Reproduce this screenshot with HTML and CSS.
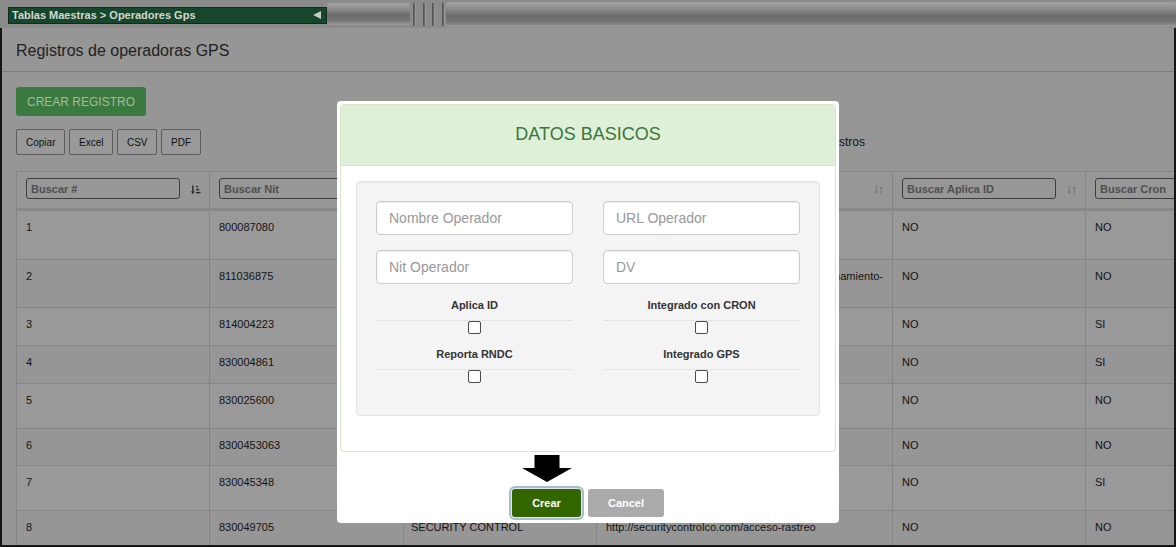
FILE: index.html
```html
<!DOCTYPE html>
<html lang="es">
<head>
<meta charset="utf-8">
<title>Operadores Gps</title>
<link rel="stylesheet" href="styles.css">
</head>
<body>
<div class="topbar">
  <div class="crumb"><span>Tablas Maestras &gt; Operadores Gps</span><span class="crumb-tri"></span></div>
  <div class="pill pill-short"></div>
  <div class="grip"><i></i><i></i><i></i><i></i></div>
  <div class="pill pill-long"></div>
</div>

<div class="frame">
  <div class="page-head"><h1>Registros de operadoras GPS</h1></div>
  <div class="content">
    <button class="btn-create">CREAR REGISTRO</button>
    <div class="toolbar">
      <button class="btn-exp">Copiar</button>
      <button class="btn-exp">Excel</button>
      <button class="btn-exp">CSV</button>
      <button class="btn-exp">PDF</button>
      <div class="dt-length">registros</div>
    </div>

    <table class="grid">
      <colgroup>
        <col class="c193"><col class="c194"><col class="c193"><col class="c296"><col class="c193"><col class="c193">
      </colgroup>
      <thead>
        <tr>
          <th><div class="th-in"><input class="search" placeholder="Buscar #"><svg class="sort on" viewBox="0 0 11 11"><path d="M2 0.5v7.5" stroke="currentColor" stroke-width="1.6"/><path d="M0 7h4l-2 3.5z" fill="currentColor"/><rect x="5.5" y="1" width="2" height="1.6" fill="currentColor"/><rect x="5.5" y="4.3" width="3.5" height="1.6" fill="currentColor"/><rect x="5.5" y="7.6" width="5" height="1.6" fill="currentColor"/></svg></div></th>
          <th><div class="th-in"><input class="search" placeholder="Buscar Nit"><svg class="sort" viewBox="0 0 11 11"><path d="M2.5 0.5v8" stroke="currentColor" stroke-width="1.3"/><path d="M0.5 7h4l-2 3z" fill="currentColor"/><path d="M8 2.5v8" stroke="currentColor" stroke-width="1.3"/><path d="M6 4h4l-2 -3z" fill="currentColor"/></svg></div></th>
          <th><div class="th-in"><input class="search"><svg class="sort" viewBox="0 0 11 11"><path d="M2.5 0.5v8" stroke="currentColor" stroke-width="1.3"/><path d="M0.5 7h4l-2 3z" fill="currentColor"/><path d="M8 2.5v8" stroke="currentColor" stroke-width="1.3"/><path d="M6 4h4l-2 -3z" fill="currentColor"/></svg></div></th>
          <th><div class="th-in"><input class="search"><svg class="sort" viewBox="0 0 11 11"><path d="M2.5 0.5v8" stroke="currentColor" stroke-width="1.3"/><path d="M0.5 7h4l-2 3z" fill="currentColor"/><path d="M8 2.5v8" stroke="currentColor" stroke-width="1.3"/><path d="M6 4h4l-2 -3z" fill="currentColor"/></svg></div></th>
          <th><div class="th-in"><input class="search" placeholder="Buscar Aplica ID"><svg class="sort" viewBox="0 0 11 11"><path d="M2.5 0.5v8" stroke="currentColor" stroke-width="1.3"/><path d="M0.5 7h4l-2 3z" fill="currentColor"/><path d="M8 2.5v8" stroke="currentColor" stroke-width="1.3"/><path d="M6 4h4l-2 -3z" fill="currentColor"/></svg></div></th>
          <th><div class="th-in"><input class="search" placeholder="Buscar Cron"><svg class="sort" viewBox="0 0 11 11"><path d="M2.5 0.5v8" stroke="currentColor" stroke-width="1.3"/><path d="M0.5 7h4l-2 3z" fill="currentColor"/><path d="M8 2.5v8" stroke="currentColor" stroke-width="1.3"/><path d="M6 4h4l-2 -3z" fill="currentColor"/></svg></div></th>
        </tr>
      </thead>
      <tbody>
        <tr class="h49"><td>1</td><td>800087080</td><td></td><td></td><td>NO</td><td>NO</td></tr>
        <tr class="h48"><td>2</td><td>811036875</td><td></td><td class="url"><span class="ln-r">posicionamiento-</span></td><td>NO</td><td>NO</td></tr>
        <tr class="h38"><td>3</td><td>814004223</td><td></td><td></td><td>NO</td><td>SI</td></tr>
        <tr class="h38"><td>4</td><td>830004861</td><td></td><td></td><td>NO</td><td>SI</td></tr>
        <tr class="h45"><td>5</td><td>830025600</td><td></td><td></td><td>NO</td><td>NO</td></tr>
        <tr class="h37"><td>6</td><td>8300453063</td><td></td><td></td><td>NO</td><td>NO</td></tr>
        <tr class="h45"><td>7</td><td>830045348</td><td></td><td></td><td>NO</td><td>SI</td></tr>
        <tr class="h45"><td>8</td><td>830049705</td><td class="nm">SECURITY CONTROL</td><td>http://securitycontrolco.com/acceso-rastreo</td><td>NO</td><td>NO</td></tr>
      </tbody>
    </table>
  </div>
</div>

<div class="modal">
  <div class="panel">
    <div class="panel-heading">DATOS BASICOS</div>
    <div class="panel-body">
      <div class="well">
        <div class="form-grid">
          <input class="fc" placeholder="Nombre Operador">
          <input class="fc" placeholder="URL Operador">
          <input class="fc" placeholder="Nit Operador">
          <input class="fc" placeholder="DV">
          <div class="chk first"><label>Aplica ID</label><div class="chk-line"><input type="checkbox"></div></div>
          <div class="chk first"><label>Integrado con CRON</label><div class="chk-line"><input type="checkbox"></div></div>
          <div class="chk"><label>Reporta RNDC</label><div class="chk-line"><input type="checkbox"></div></div>
          <div class="chk"><label>Integrado GPS</label><div class="chk-line"><input type="checkbox"></div></div>
        </div>
      </div>
    </div>
  </div>
  <div class="modal-footer">
    <div class="crear-wrap">
      <svg class="arrow" viewBox="0 0 50 27"><polygon points="12.5,0 37.5,0 37.5,13 50,13 25,27 0,13 12.5,13" fill="#000"/></svg>
      <button class="btn-crear">Crear</button>
    </div>
    <button class="btn-cancel">Cancel</button>
  </div>
</div>
</body>
</html>
```

FILE: styles.css
```css
* { box-sizing: border-box; }
html, body { margin: 0; padding: 0; }
body {
  width: 1176px;
  height: 547px;
  overflow: hidden;
  position: relative;
  background: #8b8b8b;
  font-family: "Liberation Sans", Arial, sans-serif;
}

/* ---------- top bar ---------- */
.topbar {
  height: 28px;
  display: flex;
  align-items: center;
  padding-left: 8px;
  background: #8b8b8b;
}
.crumb {
  width: 319px;
  height: 17px;
  margin-top: 2px;
  background: #17472a;
  border: 1px solid #0e2c19;
  display: flex;
  align-items: center;
  justify-content: space-between;
  padding: 0 4px 0 3px;
  color: #d3d7d3;
  font-size: 11px;
  font-weight: bold;
  white-space: nowrap;
}
.crumb-tri {
  width: 0;
  height: 0;
  border-top: 4px solid transparent;
  border-bottom: 4px solid transparent;
  border-right: 8px solid #c9c9c9;
  margin-right: 1px;
}
.pill {
  height: 22px;
  background: linear-gradient(#a3a3a3, #8f8f8f 25%, #6b6b6b 55%, #767676 80%, #9d9d9d);
  border-radius: 2px;
}
.pill-short { width: 83px; }
.pill-long { flex: 1; height: 25px; }
.grip {
  width: 36px;
  height: 23px;
  display: flex;
  gap: 6.5px;
  padding-left: 3px;
}
.grip i {
  display: block;
  width: 3px;
  background: linear-gradient(90deg, #4c4c4c, #6e6e6e 60%, #b2b2b2);
}

/* ---------- framed page ---------- */
.frame {
  height: 519px;
  border: 2px solid #161616;
  border-top: 0;
  overflow: hidden;
  background: #969696;
}
.page-head {
  height: 44px;
  border-bottom: 1px solid #7e7e7e;
  padding: 14px 14px 0;
}
.page-head h1 {
  margin: 0;
  font-size: 16px;
  line-height: 18px;
  font-weight: normal;
  color: #1f1f1f;
}
.content {
  padding: 15px 14px 0;
}
.btn-create {
  display: block;
  height: 29px;
  width: 130px;
  border: 0;
  border-radius: 3px;
  background: #3b7a3e;
  color: #a2bba2;
  font-family: inherit;
  font-size: 12px;
  padding: 0;
}
.toolbar {
  margin-top: 13px;
  display: flex;
  align-items: center;
  gap: 3.5px;
}
.btn-exp {
  height: 26px;
  padding: 0 9px;
  border: 1px solid #5c5c5c;
  border-radius: 2px;
  background: #999;
  color: #111;
  font-family: inherit;
  font-size: 10px;
}
.dt-length {
  margin-left: auto;
  margin-right: 295px;
  font-size: 12px;
  color: #141414;
}

/* ---------- table ---------- */
.grid {
  margin-top: 16px;
  width: 1262px;
  table-layout: fixed;
  border-collapse: separate;
  border-spacing: 0;
  border-top: 1px solid #858585;
  border-left: 1px solid #858585;
  font-size: 11px;
  color: #141414;
}
.c193 { width: 193px; }
.c194 { width: 194px; }
.c296 { width: 296px; }
.grid th {
  background: #979797;
  padding: 6px 8px 9px 9px;
  border-right: 1px solid #858585;
  border-bottom: 3px solid #898989;
  vertical-align: top;
  text-align: left;
  font-weight: normal;
}
.th-in {
  display: flex;
  align-items: center;
}
.search {
  width: 154px;
  height: 21px;
  border: 1px solid #3d3d3d;
  border-radius: 3px;
  background: transparent;
  padding: 0 4px;
  font-family: inherit;
  font-size: 11px;
  font-weight: bold;
  color: #4b4b4b;
}
.search::placeholder { color: #4f4f4f; }
.sort {
  margin-left: auto;
  width: 10px;
  height: 10px;
  color: #7a7a7a;
  margin-top: 2px;
}
.sort.on { color: #2c2c2c; }
.grid td {
  padding: 9px 9px 7px;
  line-height: 14px;
  vertical-align: top;
  border-right: 1px solid #858585;
  border-bottom: 1px solid #858585;
  background: #999;
}
.grid td.nm { padding-left: 7px; }
.grid tbody tr:nth-child(even) td { background: #969696; }
.h49 td { height: 49px; }
.h48 td { height: 48px; }
.h45 td { height: 45px; }
.h38 td { height: 38px; }
.h37 td { height: 37px; }
.url .ln-r {
  display: block;
  text-align: right;
  white-space: nowrap;
}

/* ---------- modal ---------- */
.modal {
  position: absolute;
  left: 337px;
  top: 101px;
  width: 502px;
  height: 422px;
  background: #fff;
  border-radius: 4px;
  padding: 3px;
}
.panel {
  border: 1px solid #d6e9c6;
  border-radius: 4px;
  overflow: hidden;
}
.panel-heading {
  background: #dff0d8;
  border-bottom: 1px solid #d6e9c6;
  color: #3c763d;
  font-size: 18px;
  line-height: 20px;
  text-align: center;
  padding: 19px 15px 21px;
}
.panel-body {
  padding: 15px;
}
.well {
  background: #f4f4f4;
  border: 1px solid #e3e3e3;
  border-radius: 4px;
  box-shadow: inset 0 1px 1px rgba(0,0,0,.05);
  padding: 19px;
  margin-bottom: 20px;
}
.form-grid {
  display: grid;
  grid-template-columns: 197px 197px;
  column-gap: 30px;
}
.fc {
  height: 34px;
  width: 197px;
  border: 1px solid #ccc;
  border-radius: 4px;
  background: #fff;
  box-shadow: inset 0 1px 1px rgba(0,0,0,.075);
  padding: 6px 12px;
  font-family: inherit;
  font-size: 14px;
  color: #555;
  margin-bottom: 15px;
}
.fc::placeholder { color: #999; }
.form-grid .fc:nth-child(n+3) { margin-bottom: 0; }
.chk {
  text-align: center;
  padding-bottom: 13px;
}
.chk.first { padding-top: 14px; }
.chk label {
  display: block;
  font-size: 11px;
  line-height: 14px;
  font-weight: bold;
  color: #333;
  margin-bottom: 8px;
}
.chk-line {
  border-top: 1px solid #e4e4e4;
  height: 14px;
}
.chk-line input {
  -webkit-appearance: none;
  appearance: none;
  display: block;
  margin: 0 auto;
  width: 13px;
  height: 13px;
  border: 1px solid #4a4a4a;
  border-radius: 2px;
  background: #fff;
}
.modal-footer {
  display: flex;
  justify-content: center;
  gap: 7px;
  padding-top: 37px;
}
.crear-wrap {
  position: relative;
}
.arrow {
  position: absolute;
  width: 50px;
  height: 27px;
  left: 50%;
  bottom: calc(100% + 7px);
  transform: translateX(-50%);
}
.btn-crear, .btn-cancel {
  height: 28px;
  border: 0;
  border-radius: 3px;
  color: #fff;
  font-family: inherit;
  font-size: 11px;
  font-weight: bold;
  padding: 0;
}
.btn-crear {
  width: 69px;
  background: #336600;
  box-shadow: 0 0 0 1px #e2e9f0, 0 0 0 3px #a8bbcf;
}
.btn-cancel {
  width: 76px;
  background: #aaa;
}
```
